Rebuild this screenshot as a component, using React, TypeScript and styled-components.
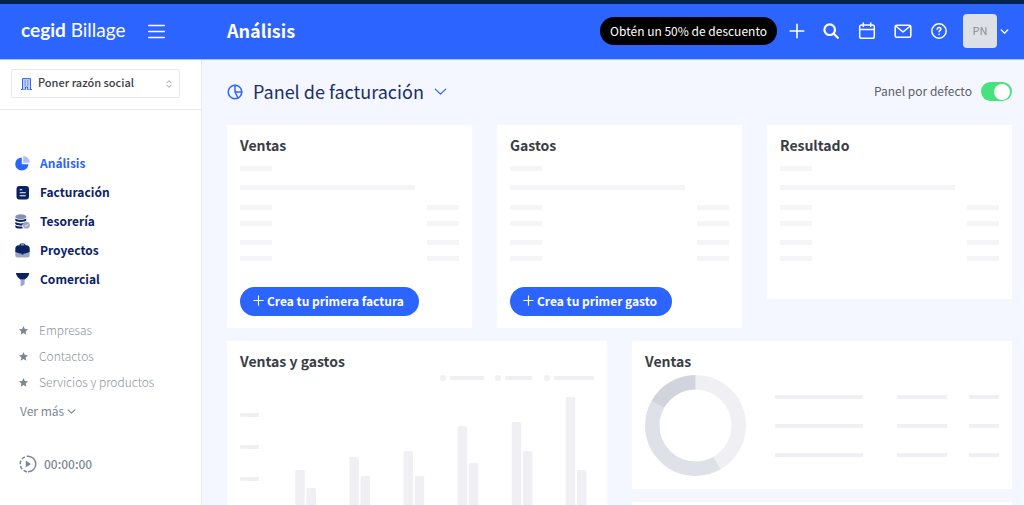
import React from "react";
import styled, { createGlobalStyle } from "styled-components";

const c = {
  blue: "#2c64ff",
  navy: "#0b2265",
  ink: "#3a3d45",
  grey: "#7d8794",
  page: "#f4f7ff",
  skeleton: "#f5f5f7",
  chart: "#f0eff4",
};

const GlobalStyle = createGlobalStyle`
  *, *::before, *::after { box-sizing: border-box; }
  body {
    margin: 0;
    background: ${c.page};
    color: ${c.ink};
    font-family: "Noto Sans CJK SC", "Open Sans", sans-serif;
    font-size: 12px;
    line-height: 20px;
  }
  button, select { font: inherit; color: inherit; }
  button { border: 0; padding: 0; background: none; cursor: pointer; }
  a { color: inherit; text-decoration: none; }
  h1, h2, h3, p, ul { margin: 0; padding: 0; }
  ul { list-style: none; }
  svg { display: block; flex: none; }
`;

const Shell = styled.div`
  height: 100vh;
  display: flex;
  flex-direction: column;
  overflow: hidden;
`;

const Header = styled.header`
  flex: none;
  display: flex;
  align-items: center;
  height: 60px;
  border-top: 4px solid #06244c;
  border-bottom: 1px solid #a9c0ff;
  background: ${c.blue};
  color: #fff;
  padding-right: 15px;
`;

const Brand = styled.div`
  flex: none;
  width: 227px;
  padding-left: 21px;
  display: flex;
  align-items: center;
  gap: 20px;
`;

const Logo = styled.a`
  width: 107px;
  padding-bottom: 4px;
  font-family: Lato, sans-serif;
  font-size: 19px;
  line-height: 24px;
  white-space: nowrap;
  b { font-weight: 700; }
`;

const PageTitle = styled.h1`
  flex: 1;
  padding-bottom: 3px;
  font-size: 18px;
  line-height: 28px;
  font-weight: 700;
`;

const Promo = styled.button`
  height: 28px;
  padding: 0 10px 1px;
  margin-bottom: 1px;
  border-radius: 14px;
  background: #000;
  font-size: 12px;
  white-space: nowrap;
`;

const Tools = styled.div`
  display: flex;
  align-items: center;
  gap: 18px;
  margin: 0 15px 1px 12px;
`;

const IconButton = styled.button`
  display: flex;
`;

const Account = styled.button`
  display: flex;
  align-items: center;
  gap: 3px;
  margin-bottom: 1px;
`;

const Avatar = styled.span`
  width: 34px;
  height: 34px;
  border-radius: 4px;
  background: #dde1e7;
  color: #868c96;
  font-size: 11px;
  line-height: 33px;
  text-align: center;
`;

const Body = styled.div`
  flex: 1;
  min-height: 0;
  display: flex;
`;

const Sidebar = styled.aside`
  flex: none;
  width: 202px;
  background: #fff;
  border-right: 1px solid #e6e9f2;
`;

const CompanyArea = styled.div`
  padding: 9px 21px 11px 11px;
  border-bottom: 1px solid #e9ebef;
`;

const CompanyBox = styled.label`
  display: flex;
  align-items: center;
  height: 29px;
  padding: 0 7px 0 9px;
  border: 1px solid #e6e8ec;
  border-radius: 2px;
`;

const CompanySelect = styled.select`
  appearance: none;
  flex: 1;
  min-width: 0;
  margin-left: 6px;
  padding: 0 0 3px;
  border: 0;
  background: none;
  font-size: 11px;
  font-weight: 500;
`;

const MainNav = styled.ul`
  padding: 39px 0 0 15px;
`;

const NavLink = styled.a<{ $active?: boolean }>`
  display: flex;
  align-items: center;
  gap: 10px;
  height: 29px;
  font-size: 12px;
  font-weight: 700;
  color: ${(p) => (p.$active ? c.blue : c.navy)};
  span { padding-bottom: 1px; }
`;

const Favourites = styled.ul`
  padding: 23px 0 0 19px;
`;

const FavLink = styled.a`
  display: flex;
  align-items: center;
  gap: 11px;
  height: 26px;
  font-size: 12px;
  font-weight: 300;
  color: #8d95a1;
`;

const More = styled.button`
  display: flex;
  align-items: center;
  gap: 3px;
  margin: 6px 0 0 20px;
  color: ${c.grey};
`;

const Timer = styled.button`
  display: flex;
  align-items: center;
  gap: 7px;
  margin: 33px 0 0 19px;
  font-size: 12px;
  font-weight: 500;
  color: ${c.grey};
`;

const Main = styled.main`
  flex: 1;
  min-width: 0;
  overflow: hidden;
  padding: 0 12px 12px 25px;
`;

const PanelBar = styled.div`
  display: flex;
  align-items: center;
  justify-content: space-between;
  height: 65px;
  padding-bottom: 2px;
`;

const PanelPicker = styled.button`
  display: flex;
  align-items: center;
  gap: 10px;
  font-size: 18px;
  line-height: 26px;
  color: #1b2f66;
  span { padding-bottom: 2px; }
`;

const Toggle = styled.label`
  display: flex;
  align-items: center;
  gap: 9px;
  color: #5a5f68;
  span { padding-bottom: 1px; }
`;

const Switch = styled.input`
  appearance: none;
  display: flex;
  align-items: center;
  width: 31px;
  height: 19px;
  margin: 0;
  padding: 0 2px;
  border-radius: 10px;
  background: #c9ced6;
  &::before {
    content: "";
    width: 16px;
    height: 16px;
    border-radius: 50%;
    background: #fff;
  }
  &:checked {
    justify-content: flex-end;
    background: #45e27d;
  }
`;

const Grid = styled.div<{ $cols: number }>`
  display: grid;
  grid-template-columns: repeat(${(p) => p.$cols}, minmax(0, 1fr));
  align-items: start;
  gap: 25px;
  margin-bottom: 13px;
`;

const Stack = styled.div`
  display: grid;
  gap: 13px;
`;

const Card = styled.section`
  min-height: 120px;
  padding: 10px 13px 12px;
  background: #fff;
`;

const CardTitle = styled.h3`
  padding-bottom: 1px;
  font-size: 14px;
  line-height: 20px;
  font-weight: 700;
`;

const Bones = styled.div`
  padding: 10px 0 26px;
`;

const BoneRow = styled.div<{ $gap: number }>`
  display: flex;
  justify-content: space-between;
  margin-bottom: ${(p) => p.$gap}px;
`;

const Bone = styled.span<{ $wide?: boolean }>`
  width: ${(p) => (p.$wide ? "80%" : "32px")};
  height: 5px;
  background: ${c.skeleton};
`;

const Cta = styled.button`
  display: flex;
  align-items: center;
  gap: 3px;
  height: 29px;
  padding: 0 15px 2px 13px;
  border-radius: 15px;
  background: ${c.blue};
  color: #fff;
  font-size: 12px;
  font-weight: 700;
`;

const ChartSvg = styled.svg`
  width: 100%;
  height: auto;
  margin-top: 3px;
`;

const DonutRow = styled.div`
  display: flex;
  align-items: center;
  gap: 29px;
  margin-top: 3px;
  padding-bottom: 1px;
`;

const Legend = styled.div`
  flex: 1;
  display: grid;
  grid-template-columns: 122fr 72fr 30fr;
  row-gap: 25px;
`;

const LegendBar = styled.span<{ $fill: number }>`
  width: ${(p) => p.$fill}%;
  height: 4px;
  background: ${c.chart};
`;

const stroke = {
  fill: "none",
  stroke: "currentColor",
  strokeLinecap: "round" as const,
  strokeLinejoin: "round" as const,
};

const Chevron = ({ w, sw = 1.3 }: { w: number; sw?: number }) => (
  <svg width={w} height={w} viewBox="0 0 12 12" {...stroke} strokeWidth={sw}>
    <path d="M1.5 3.8 6 8.2l4.5-4.4" />
  </svg>
);

const Plus = ({ w, sw = 1.6 }: { w: number; sw?: number }) => (
  <svg width={w} height={w} viewBox="0 0 16 16" {...stroke} strokeWidth={sw}>
    <path d="M8 1.2v13.6M1.2 8h13.6" />
  </svg>
);

const PieIcon = () => (
  <svg width="15" height="15" viewBox="0 0 15 15" fill="currentColor">
    <path d="M6.8 1.4v6.8h6.6A6.6 6.6 0 1 1 6.8 1.4Z" />
    <path d="M8.2 0a6.8 6.8 0 0 1 6.6 6.7H8.2Z" opacity=".4" />
  </svg>
);

const InvoiceIcon = () => (
  <svg width="15" height="15" viewBox="0 0 15 15">
    <rect x="1.5" y="1" width="12.5" height="13.5" rx="3" fill="currentColor" />
    <path d="M4.7 4.7h2.5M4.7 7.7h6M4.7 10.7h6" stroke="#fff" strokeWidth="1.1" />
  </svg>
);

const CoinsIcon = () => (
  <svg width="15" height="15" viewBox="0 0 15 15" fill="currentColor">
    <ellipse cx="5.8" cy="2.7" rx="5.5" ry="2.4" opacity=".5" />
    <path d="M.3 4.4c2.2 1.7 8.800 1.700 11 0v1.800c0 2.300-11 2.300-11 0Z" />
    <path d="M.3 8c2 1.500 6 1.700 9 1-1.200.500-1.900 1.300-2.100 2.400C4 11.600.3 11 .3 9.500Z" />
    <path d="M.3 11.200c1.500 1.200 4.400 1.500 6.900 1.300.1.700.400 1.300.8 1.800-3.500.700-7.700.1-7.700-1.600Z" />
    <circle cx="11.4" cy="11.2" r="3.4" opacity=".4" />
    <path d="m9.900 11.300 1.100 1.100 2-2.100" fill="none" stroke="#fff" />
  </svg>
);

const BriefcaseIcon = () => (
  <svg width="15" height="15" viewBox="0 0 15 15" fill="currentColor">
    <path d="M.3 7.500h14.400V12a2.500 2.500 0 0 1-2.500 2.500H2.800A2.500 2.500 0 0 1 .3 12Z" opacity=".4" />
    <path
      fillRule="evenodd"
      d="M4.500 2.300C4.500 1.200 5.200.5 6.200.5h2.600c1 0 1.700.7 1.700 1.800h.7a3.500 3.500 0 0 1 3.500 3.500v2.900c-1.800 1.200-4 1.700-6.200 1.900v.8h-2v-.8C4.300 10.400 2.100 9.900.3 8.700V5.800a3.500 3.500 0 0 1 3.500-3.500Zm1.100 0h3.800c0-.5-.2-.7-.6-.7H6.200c-.4 0-.6.2-.6.7Z"
    />
  </svg>
);

const FunnelIcon = () => (
  <svg width="15" height="15" viewBox="0 0 15 15" fill="currentColor">
    <path d="M1.400 1h12.400c.4 0 .5.300.4.700C13.600 4.400 11.500 6.200 9.600 7.500h-4C3.700 6.200 1.600 4.400 1 1.700.9 1.300 1 1 1.400 1Z" />
    <path d="M5.600 7.500h4v4.700l-3 2c-.5.300-1 0-1-.5Z" opacity=".4" />
  </svg>
);

const StarIcon = () => (
  <svg width="9" height="9" viewBox="0 0 24 24" fill={c.grey}>
    <path d="m12 0 3.600 7.800 8.400 1-6.200 5.900L19.400 23 12 18.900 4.600 23l1.600-8.300L0 8.800l8.400-1Z" />
  </svg>
);

const TimerIcon = () => (
  <svg width="18" height="18" viewBox="0 0 18 18" fill="none" stroke="currentColor" strokeWidth="1.5">
    <path d="M9 1.200a7.800 7.800 0 0 1 0 15.600" />
    <path d="M9 16.800A7.800 7.800 0 0 1 9 1.200" strokeDasharray="3.6 1.9" strokeDashoffset="-1" />
    <path d="M6.800 5.500v7l5.200-3.500Z" fill="currentColor" stroke="none" />
  </svg>
);

const BuildingIcon = () => (
  <svg width="11" height="12" viewBox="0 0 11 12" fill="none" stroke={c.blue}>
    <path d="M0 11.500h11" />
    <path d="M1.500 11.500V.6h8v10.900" fill="#c3d2ff" />
    <path d="M4.500 11.500V9h2v2.500" fill="#fff" />
    <path d="M3.500 3h1.200M6.300 3h1.200M3.500 5h1.200M6.300 5h1.200M3.500 7h1.200M6.300 7h1.200" />
  </svg>
);

const navItems = [
  { label: "Análisis", icon: <PieIcon />, active: true },
  { label: "Facturación", icon: <InvoiceIcon /> },
  { label: "Tesorería", icon: <CoinsIcon /> },
  { label: "Proyectos", icon: <BriefcaseIcon /> },
  { label: "Comercial", icon: <FunnelIcon /> },
];

const summaries = [
  { title: "Ventas", action: "Crea tu primera factura" },
  { title: "Gastos", action: "Crea tu primer gasto" },
  { title: "Resultado" },
];

const boneRows = [
  { gap: 14 },
  { gap: 15, wide: true },
  { gap: 11, pair: true },
  { gap: 14, pair: true },
  { gap: 11, pair: true },
  { gap: 0, pair: true },
];

const barPairs = [
  [95, 113],
  [82, 101],
  [76, 101],
  [51, 88],
  [47, 76],
  [22, 95],
];

const chartLegend = [
  { x: 203, w: 34 },
  { x: 258, w: 27 },
  { x: 307, w: 40 },
];

const legendFills = [72, 69, 100];

const BarChart = () => (
  <ChartSvg viewBox="0 0 354 190" fill={c.chart} role="img" aria-label="Ventas y gastos">
    {chartLegend.map((l) => (
      <g key={l.x}>
        <circle cx={l.x} cy="3" r="3" />
        <rect x={l.x + 7} y="1" width={l.w} height="4" rx="1" />
      </g>
    ))}
    {[38, 70, 102, 134].map((y) => (
      <rect key={y} x="0" y={y} width="19" height="4" rx="1" />
    ))}
    {barPairs.map(([a, b], i) => (
      <g key={i}>
        <rect x={55.3 + i * 54.1} y={a} width="9.5" height={170 - a} rx="1.5" />
        <rect x={66.5 + i * 54.1} y={b} width="9.5" height={170 - b} rx="1.5" />
      </g>
    ))}
  </ChartSvg>
);

const Donut = () => (
  <svg width="101" height="101" viewBox="0 0 101 101" fill="none" strokeWidth="14.5" role="img" aria-label="Ventas">
    <g transform="rotate(-90 50.5 50.5)">
      <circle cx="50.5" cy="50.5" r="43.2" pathLength="360" stroke={c.chart} strokeDasharray="150 360" />
      <circle cx="50.5" cy="50.5" r="43.2" pathLength="360" stroke="#dee1e7" strokeDasharray="149 360" strokeDashoffset="-150" />
      <circle cx="50.5" cy="50.5" r="43.2" pathLength="360" stroke="#d2d4dd" strokeDasharray="61 360" strokeDashoffset="-299" />
    </g>
  </svg>
);

export default function App() {
  return (
    <Shell>
      <GlobalStyle />
      <Header>
        <Brand>
          <Logo href="#">
            <b>cegid</b> Billage
          </Logo>
          <IconButton aria-label="Menú">
            <svg width="17" height="15" viewBox="0 0 17 15" {...stroke} strokeWidth="1.5">
              <path d="M.7 1.500h15.600M.7 7.500h15.600M.7 13.500h15.600" />
            </svg>
          </IconButton>
        </Brand>
        <PageTitle>Análisis</PageTitle>
        <Promo>Obtén un 50% de descuento</Promo>
        <Tools>
          <IconButton aria-label="Añadir">
            <Plus w={16} />
          </IconButton>
          <IconButton aria-label="Buscar">
            <svg width="17" height="16" viewBox="0 0 17 16" {...stroke} strokeWidth="2.2">
              <circle cx="6.7" cy="6.7" r="5.3" />
              <path d="m10.800 10.800 4 4" />
            </svg>
          </IconButton>
          <IconButton aria-label="Calendario">
            <svg width="18" height="18" viewBox="0 0 18 18" {...stroke} strokeWidth="1.5">
              <rect x="1.7" y="3" width="14.6" height="13.3" rx="1.8" />
              <path d="M1.700 7.400h14.600M5.300 1v3.500M12.700 1v3.500" />
            </svg>
          </IconButton>
          <IconButton aria-label="Mensajes">
            <svg width="18" height="18" viewBox="0 0 18 18" {...stroke} strokeWidth="1.6">
              <rect x="1.2" y="3.2" width="15.6" height="12" rx="1.5" />
              <path d="m1.700 4 7.300 6 7.300-6" />
            </svg>
          </IconButton>
          <IconButton aria-label="Ayuda">
            <svg width="18" height="18" viewBox="0 0 18 18" {...stroke} strokeWidth="1.5">
              <circle cx="9" cy="9" r="7.2" />
              <path d="M7.200 7.300c.1-1.200.9-1.800 1.900-1.800s1.800.7 1.800 1.600c0 1.300-1.800 1.400-1.800 2.700M9.100 12.300v.1" />
            </svg>
          </IconButton>
        </Tools>
        <Account aria-label="Cuenta">
          <Avatar>PN</Avatar>
          <Chevron w={9} sw={1.8} />
        </Account>
      </Header>

      <Body>
        <Sidebar>
          <CompanyArea>
            <CompanyBox>
              <BuildingIcon />
              <CompanySelect aria-label="Empresa">
                <option>Poner razón social</option>
              </CompanySelect>
              <svg width="6" height="8" viewBox="0 0 6 8" {...stroke} stroke="#9aa1ab">
                <path d="M.7 3 3 .7 5.300 3M.7 5 3 7.300 5.300 5" />
              </svg>
            </CompanyBox>
          </CompanyArea>
          <nav>
            <MainNav>
              {navItems.map((n) => (
                <li key={n.label}>
                  <NavLink href="#" $active={n.active}>
                    {n.icon}
                    <span>{n.label}</span>
                  </NavLink>
                </li>
              ))}
            </MainNav>
            <Favourites>
              {["Empresas", "Contactos", "Servicios y productos"].map((f) => (
                <li key={f}>
                  <FavLink href="#">
                    <StarIcon />
                    {f}
                  </FavLink>
                </li>
              ))}
            </Favourites>
          </nav>
          <More>
            Ver más <Chevron w={9} sw={1.6} />
          </More>
          <Timer>
            <TimerIcon />
            00:00:00
          </Timer>
        </Sidebar>

        <Main>
          <PanelBar>
            <PanelPicker>
              <svg width="16" height="16" viewBox="0 0 16 16" {...stroke} stroke={c.blue} strokeWidth="1.5">
                <circle cx="8" cy="8" r="6.8" />
                <path d="M8 1.200V8l3 6M8 8h6.800" />
              </svg>
              <span>Panel de facturación</span>
              <svg width="13" height="13" viewBox="0 0 12 12" {...stroke} stroke={c.blue} strokeWidth="1.2">
                <path d="M1.200 3.800 6 8.400l4.800-4.600" />
              </svg>
            </PanelPicker>
            <Toggle>
              <span>Panel por defecto</span>
              <Switch type="checkbox" defaultChecked />
            </Toggle>
          </PanelBar>

          <Grid $cols={3}>
            {summaries.map((s) => (
              <Card key={s.title}>
                <CardTitle>{s.title}</CardTitle>
                <Bones>
                  {boneRows.map((r, i) => (
                    <BoneRow key={i} $gap={r.gap}>
                      <Bone $wide={r.wide} />
                      {r.pair && <Bone />}
                    </BoneRow>
                  ))}
                </Bones>
                {s.action && (
                  <Cta>
                    <Plus w={11} sw={1.7} />
                    {s.action}
                  </Cta>
                )}
              </Card>
            ))}
          </Grid>

          <Grid $cols={2}>
            <Card>
              <CardTitle>Ventas y gastos</CardTitle>
              <BarChart />
            </Card>
            <Stack>
              <Card>
                <CardTitle>Ventas</CardTitle>
                <DonutRow>
                  <Donut />
                  <Legend>
                    {Array.from({ length: 9 }, (_, i) => (
                      <LegendBar key={i} $fill={legendFills[i % 3]} />
                    ))}
                  </Legend>
                </DonutRow>
              </Card>
              <Card />
            </Stack>
          </Grid>
        </Main>
      </Body>
    </Shell>
  );
}
